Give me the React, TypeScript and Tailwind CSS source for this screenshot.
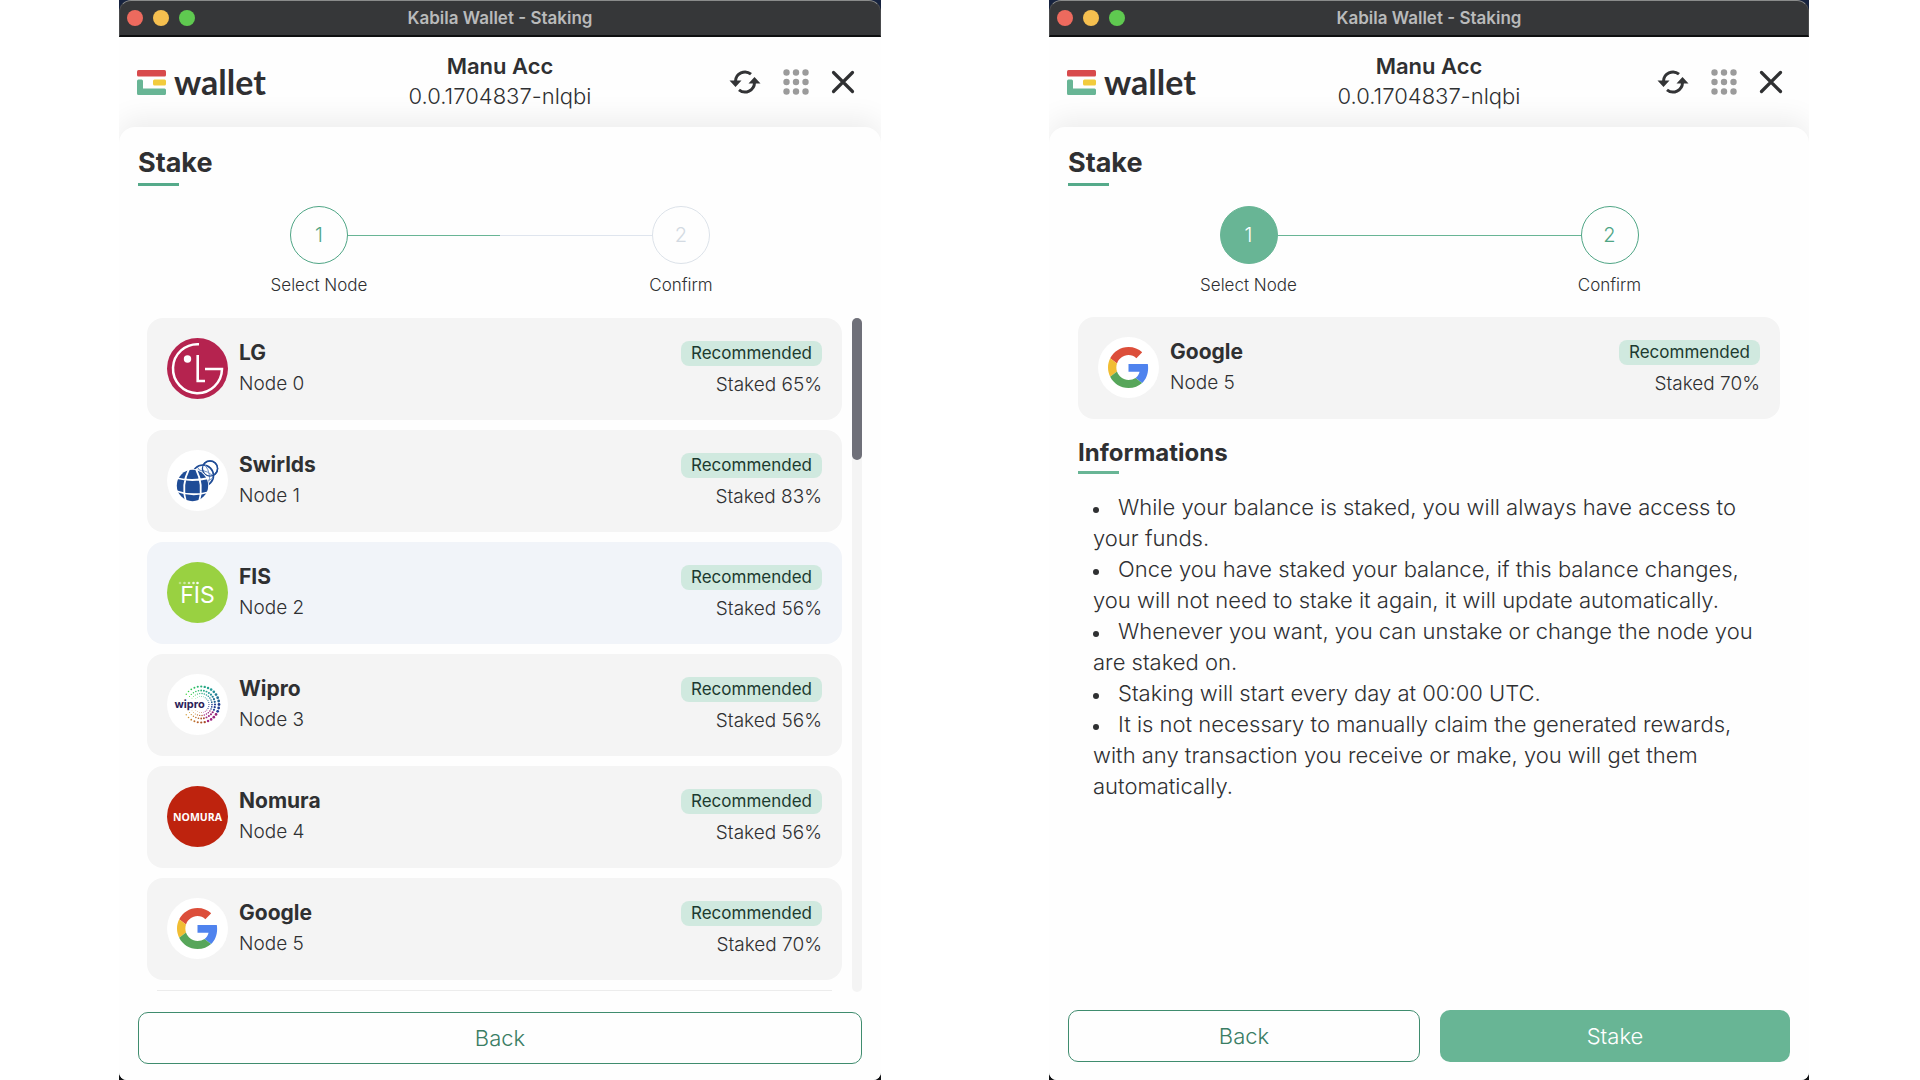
import type { ReactNode } from "react";

type Node = { name: string; id: number; staked: number; logo: ReactNode; highlighted?: boolean };

function WindowBar() {
  return (
    <div className="bg-[#17233f]">
      <div className="grid h-[37px] grid-cols-[1fr_auto_1fr] items-center rounded-t-xl border-x border-t border-b-2 border-x-[#4a4b4d] border-t-[#8a8b8b] border-b-[#0e0f10] bg-[#363739] px-[7px]">
        <div className="flex gap-[10px]">
          <button aria-label="Close window" className="size-4 rounded-full bg-[#ed6a5e]" />
          <button aria-label="Minimize window" className="size-4 rounded-full bg-[#f5bf4f]" />
          <button aria-label="Zoom window" className="size-4 rounded-full bg-[#5fc950]" />
        </div>
        <span className="text-[17px] leading-5 font-semibold text-[#b9babb]">Kabila Wallet - Staking</span>
      </div>
    </div>
  );
}

function BrandMark() {
  return (
    <a href="#" className="flex items-baseline gap-2" aria-label="Kabila wallet">
      <svg width="29" height="25" viewBox="0 0 29 25" aria-hidden="true">
        <rect width="29" height="6.5" rx="1.5" fill="#d84a4c" />
        <rect x="16" y="9.5" width="13" height="6" rx="1.5" fill="#f2cb3d" />
        <path d="M1.5 9.5h3Q6 9.5 6 11v7.5h21.5q1.500 0 1.500 1.500v3.500q0 1.500-1.500 1.500h-26Q0 25 0 23.500V11q0-1.500 1.500-1.500z" fill="#68b595" />
      </svg>
      <span className="font-[Lato] text-[34px] leading-9 font-bold text-[#2f2f31]">wallet</span>
    </a>
  );
}

function SyncIcon() {
  return (
    <svg width="32" height="24" viewBox="0 0 32 24" fill="none" aria-hidden="true">
      <path d="M6.500 11.500A9.500 9.500 0 0 1 22 4.200M25.500 12.500A9.500 9.500 0 0 1 10 19.800" stroke="#333436" strokeWidth="3" />
      <path d="M.5 10.500h12L6.500 17z M19.500 13.500h12L25.500 7z" fill="#333436" />
    </svg>
  );
}

function AppsIcon() {
  return (
    <svg width="26" height="26" viewBox="0 0 26 26" fill="#9b9b9b" aria-hidden="true">
      {[3.5, 13, 22.5].map((y) => [3.5, 13, 22.5].map((x) => <circle key={`${x}-${y}`} cx={x} cy={y} r="3.200" />))}
    </svg>
  );
}

function CloseIcon() {
  return (
    <svg width="24" height="24" viewBox="0 0 24 24" aria-hidden="true">
      <path d="M2.500 2.500l19 19M21.500 2.500l-19 19" stroke="#2f3032" strokeWidth="3.200" strokeLinecap="round" />
    </svg>
  );
}

function AccountHeader() {
  return (
    <header className="grid h-[90px] grid-cols-[1fr_auto_1fr] items-center px-[18px]">
      <BrandMark />
      <div className="pb-[2px] text-center">
        <p className="text-[22px] leading-[30px] font-semibold">Manu Acc</p>
        <p className="text-[22px] leading-[30px] font-light">0.0.1704837-nlqbi</p>
      </div>
      <div className="flex items-center justify-end gap-[22px] pr-2">
        <button aria-label="Refresh"><SyncIcon /></button>
        <button aria-label="Apps"><AppsIcon /></button>
        <button aria-label="Close"><CloseIcon /></button>
      </div>
    </header>
  );
}

function Step({ n, label, circle, before, after }: { n: number; label: string; circle: string; before: string; after: string }) {
  return (
    <li className="flex flex-col items-center">
      <div className="flex w-full items-center">
        <span className={`h-px flex-1 ${before}`} />
        <span className={`flex size-[58px] items-center justify-center rounded-full border text-xl font-light ${circle}`}>{n}</span>
        <span className={`h-px flex-1 ${after}`} />
      </div>
      <span className="mt-[11px] text-[17px] leading-5 font-light">{label}</span>
    </li>
  );
}

const ACTIVE = "border-[#4fa585] text-[#4fa585]";
const DONE = "border-[#68b595] bg-[#68b595] text-white";
const IDLE = "border-[#dce2e9] text-[#d3dae2]";

function LgLogo() {
  return (
    <svg viewBox="0 0 61 61" fill="none" className="size-[61px]" aria-hidden="true">
      <circle cx="30.500" cy="30.500" r="30.500" fill="#b5234f" />
      <path d="M32 6.200A24.500 24.500 0 1 0 55 31H38" stroke="#fff" strokeWidth="2.500" />
      <path d="M30.700 17v26H38" stroke="#fff" strokeWidth="2.600" />
      <circle cx="20.500" cy="21" r="3.700" fill="#fff" />
    </svg>
  );
}

function SwirldsLogo() {
  return (
    <svg viewBox="0 0 61 61" fill="none" className="size-[61px]" aria-hidden="true">
      <circle cx="30.500" cy="30.500" r="30.500" fill="#fff" />
      <circle cx="43" cy="18.500" r="7.600" stroke="#1f4c96" strokeWidth="1.500" />
      <circle cx="36" cy="25.500" r="10.500" fill="#fff" stroke="#1f4c96" strokeWidth="1.700" />
      <path d="M27 21q9-3 18 4M38 15q7 9 3 19M31 18q7 7 7 18M37 31q5 0 9-3" stroke="#6d8fc4" strokeWidth="1" />
      <circle cx="43" cy="18.500" r="7.600" stroke="#1f4c96" strokeWidth="1.300" />
      <circle cx="25.500" cy="35.500" r="16.500" fill="#fff" />
      <circle cx="25.500" cy="35.500" r="15.700" fill="#1f4c96" />
      <path d="M9 28q16 4 33 0M9 41q16 6 33 1M22 19q-8 16-3 33M29 19q8 16 3 33" stroke="#fff" strokeWidth="1.800" />
    </svg>
  );
}

function FisLogo() {
  return (
    <svg viewBox="0 0 61 61" className="size-[61px]" aria-hidden="true">
      <circle cx="30.500" cy="30.500" r="30.500" fill="#99d141" />
      {[13, 17.5, 22, 26.500, 30.500].map((x, i) => (
        <circle key={x} cx={x} cy="21" r="1.300" fill="#fff" opacity={0.35 + i * 0.15} />
      ))}
      <text x="30.500" y="41" textAnchor="middle" fontFamily="Inter, sans-serif" fontSize="23" fontWeight="400" fill="#fff">FIS</text>
    </svg>
  );
}

function WiproLogo() {
  const dots: ReactNode[] = [];
  [18, 14, 11, 8].forEach((r, ring) => {
    const count = [27, 27, 25, 21][ring];
    for (let i = 0; i < count; i++) {
      const angle = -145 + (290 * i) / (count - 1);
      const rad = (angle * Math.PI) / 180;
      const side = Math.cos(rad / 2);
      const hue = angle < 0 ? 215 - (Math.abs(angle) / 145) * 95 : angle < 30 ? 225 : angle < 75 ? 315 : 375 + ((angle - 75) / 70) * 25;
      dots.push(
        <circle key={`${ring}-${i}`} cx={34 + r * Math.cos(rad)} cy={30.500 + r * Math.sin(rad)} r={(0.400 + side) * (1 - ring * 0.2)} fill={`hsl(${hue} 62% ${35 + (1 - side) * 25}%)`} />,
      );
    }
  });
  return (
    <svg viewBox="0 0 61 61" className="size-[61px]" aria-hidden="true">
      <circle cx="30.500" cy="30.500" r="30.500" fill="#fff" />
      {dots}
      <rect x="7" y="25" width="30" height="11" fill="#fff" />
      <text x="7.500" y="34" fontFamily="Inter, sans-serif" fontSize="11" fontWeight="700" fill="#2a2158">wipro</text>
    </svg>
  );
}

function NomuraLogo() {
  return (
    <svg viewBox="0 0 61 61" className="size-[61px]" aria-hidden="true">
      <circle cx="30.500" cy="30.500" r="30.500" fill="#be230e" />
      <text x="30.500" y="35" textAnchor="middle" fontFamily="Open Sans, sans-serif" fontSize="10.500" fontWeight="700" fill="#fff">NOMURA</text>
    </svg>
  );
}

function GoogleLogo() {
  return (
    <span className="flex size-[61px] items-center justify-center rounded-full bg-white">
      <svg viewBox="0 0 48 48" className="size-[41px]" aria-hidden="true">
        <path fill="#dc4e3a" d="M24 9.500c3.540 0 6.710 1.220 9.210 3.600l6.850-6.850C35.900 2.380 30.470 0 24 0 14.620 0 6.510 5.380 2.560 13.220l7.980 6.190C12.430 13.720 17.740 9.500 24 9.500z" />
        <path fill="#4f83ee" d="M46.980 24.550c0-1.570-.15-3.090-.38-4.550H24v9.020h12.940c-.58 2.960-2.260 5.480-4.780 7.180l7.730 6c4.510-4.180 7.090-10.360 7.090-17.650z" />
        <path fill="#f1bd33" d="M10.530 28.590c-.48-1.450-.76-2.990-.76-4.590s.27-3.140.76-4.590l-7.980-6.190C.92 16.460 0 20.120 0 24c0 3.880.92 7.540 2.560 10.780l7.970-6.190z" />
        <path fill="#57a65a" d="M24 48c6.480 0 11.930-2.130 15.890-5.810l-7.730-6c-2.150 1.450-4.920 2.300-8.160 2.300-6.260 0-11.570-4.220-13.470-9.910l-7.980 6.190C6.510 42.620 14.620 48 24 48z" />
      </svg>
    </span>
  );
}

const GOOGLE: Node = { name: "Google", id: 5, staked: 70, logo: <GoogleLogo /> };

const NODES: Node[] = [
  { name: "LG", id: 0, staked: 65, logo: <LgLogo /> },
  { name: "Swirlds", id: 1, staked: 83, logo: <SwirldsLogo /> },
  { name: "FIS", id: 2, staked: 56, logo: <FisLogo />, highlighted: true },
  { name: "Wipro", id: 3, staked: 56, logo: <WiproLogo /> },
  { name: "Nomura", id: 4, staked: 56, logo: <NomuraLogo /> },
  GOOGLE,
];

const NOTES = [
  "While your balance is staked, you will always have access to your funds.",
  "Once you have staked your balance, if this balance changes, you will not need to stake it again, it will update automatically.",
  "Whenever you want, you can unstake or change the node you are staked on.",
  "Staking will start every day at 00:00 UTC.",
  "It is not necessary to manually claim the generated rewards, with any transaction you receive or make, you will get them automatically.",
];

function NodeCard({ node }: { node: Node }) {
  return (
    <div className={`flex h-[102px] w-full shrink-0 items-start gap-[11px] rounded-2xl px-5 pt-5 text-left ${node.highlighted ? "bg-[#f1f4f9]" : "bg-[#f4f4f4]"}`}>
      {node.logo}
      <div className="flex-1">
        <p className="text-[21px] leading-[30px] font-bold">{node.name}</p>
        <p className="text-[19px] leading-8 font-light">Node {node.id}</p>
      </div>
      <div className="flex flex-col items-end pt-[3px]">
        <span className="rounded-lg bg-[#d0e9df] px-[10px] text-[17px] leading-[25px] text-[#1c3a2f]">Recommended</span>
        <span className="mt-1 text-[19px] leading-[30px] font-light">Staked {node.staked}%</span>
      </div>
    </div>
  );
}

function WalletWindow({ steps, children }: { steps: ReactNode; children: ReactNode }) {
  return (
    <section className="flex h-full min-h-0 min-w-0 flex-col bg-[#111214]">
      <WindowBar />
      <div className="flex min-h-0 flex-1 flex-col overflow-hidden rounded-b-lg bg-[#fefefe]">
        <AccountHeader />
        <main className="flex min-h-0 flex-1 flex-col rounded-t-2xl bg-[#fefefe] px-[19px] pt-5 shadow-[0_-8px_28px_rgba(0,0,0,0.07)]">
          <h1 className="text-[27px] leading-8 font-bold">Stake</h1>
          <div className="mt-1 h-[3px] w-[41px] bg-[#55aa8a]" />
          <ol className="mt-5 grid grid-cols-2">{steps}</ol>
          {children}
        </main>
      </div>
    </section>
  );
}

const OUTLINE_BUTTON = "h-[52px] flex-1 rounded-[10px] border border-[#3f8c6e] text-[22px] font-light text-[#3a7d64]";

export default function App() {
  return (
    <div className="grid h-screen grid-cols-[762fr_760fr] gap-[168px] bg-white pr-[111px] pl-[119px] font-[Inter,sans-serif] text-[#2f3032]">
      <WalletWindow
        steps={
          <>
            <Step n={1} label="Select Node" circle={ACTIVE} before="bg-transparent" after="bg-[#68b595]" />
            <Step n={2} label="Confirm" circle={IDLE} before="bg-[#dfe5ee]" after="bg-transparent" />
          </>
        }
      >
        <div className="mt-[23px] flex min-h-0 flex-1 gap-[10px] pl-[9px]">
          <div className="flex min-h-0 flex-1 flex-col gap-[10px] overflow-hidden">
            {NODES.map((node) => (
              <button key={node.id} className="block w-full shrink-0">
                <NodeCard node={node} />
              </button>
            ))}
            <div className="mx-[10px] h-px shrink-0 bg-[#ececec]" />
          </div>
          <div className="w-[10px] rounded-full bg-[#f4f4f4]">
            <div className="h-[21%] rounded-full bg-[#6f7079]" />
          </div>
        </div>
        <div className="flex pt-5 pb-4">
          <button className={OUTLINE_BUTTON}>Back</button>
        </div>
      </WalletWindow>

      <WalletWindow
        steps={
          <>
            <Step n={1} label="Select Node" circle={DONE} before="bg-transparent" after="bg-[#68b595]" />
            <Step n={2} label="Confirm" circle={ACTIVE} before="bg-[#68b595]" after="bg-transparent" />
          </>
        }
      >
        <div className="mt-[22px] min-h-0 flex-1 px-[10px]">
          <NodeCard node={GOOGLE} />
          <h2 className="mt-[18px] text-2xl leading-8 font-bold">Informations</h2>
          <div className="mt-[2px] h-[3px] w-[41px] bg-[#68b595]" />
          <ul className="mt-[18px] list-inside list-disc pr-2 pl-[15px] text-[22px] leading-[31px] font-light marker:text-lg">
            {NOTES.map((note) => (
              <li key={note}>{note}</li>
            ))}
          </ul>
        </div>
        <div className="flex gap-5 pb-[18px]">
          <button className={OUTLINE_BUTTON}>Back</button>
          <button className="h-[52px] flex-1 rounded-[10px] bg-[#68b595] text-[22px] font-light text-white">Stake</button>
        </div>
      </WalletWindow>
    </div>
  );
}
